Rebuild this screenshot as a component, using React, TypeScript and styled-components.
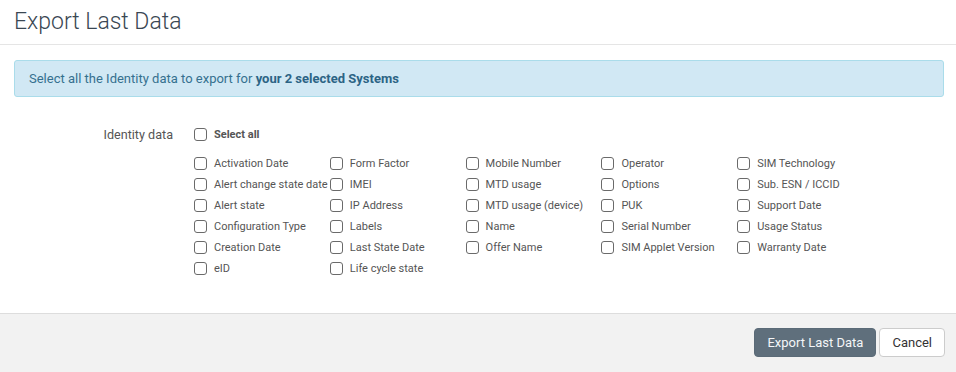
import React from "react";
import styled, { createGlobalStyle } from "styled-components";

const Global = createGlobalStyle`
  html, body { margin: 0; padding: 0; background: #fff; }
  body { font-family: Roboto, "Liberation Sans", Arial, sans-serif; }
  * { box-sizing: border-box; }
`;

const Modal = styled.div`
  width: 956px;
  height: 372px;
  display: flex;
  flex-direction: column;
  background: #fff;
`;

const Header = styled.div`
  height: 45px;
  border-bottom: 1px solid #e5e5e5;
  padding: 0 14px;
  display: flex;
  align-items: center;
`;

const Title = styled.h1`
  margin: 0;
  margin-top: -1px;
  font-size: 23px;
  font-weight: 300;
  color: #3a4753;
`;

const Body = styled.div`
  flex: 1;
  padding: 15px 12px 0 14px;
`;

const Alert = styled.div`
  height: 37px;
  background: #d1e8f4;
  border: 1px solid #aadcea;
  border-radius: 3px;
  padding: 0 14px;
  display: flex;
  align-items: center;
  font-size: 13px;
  color: #35708f;
  strong { font-weight: 700; color: #2c6485; }
`;

const FormRow = styled.div`
  display: flex;
  margin-top: 27px;
  margin-left: -14px;
`;

const FieldLabel = styled.div`
  width: 173px;
  text-align: right;
  font-size: 12.6px;
  color: #555;
  line-height: 21px;
  margin-right: 21px;
`;

const Options = styled.div`
  display: flex;
  flex-direction: column;
`;

const Grid = styled.div`
  display: grid;
  grid-template-columns: repeat(5, 135.8px);
  margin-top: 8px;
`;

const Column = styled.div`
  display: flex;
  flex-direction: column;
`;

const Item = styled.label<{ $bold?: boolean }>`
  height: 21px;
  display: flex;
  align-items: center;
  font-size: 11px;
  color: #555;
  font-weight: ${(p) => (p.$bold ? 700 : 400)};
  white-space: nowrap;
`;

const Box = styled.span`
  width: 13px;
  height: 13px;
  border: 1px solid #6a6a6a;
  border-radius: 3px;
  background: #fff;
  margin-right: 7px;
  flex: none;
`;

const Footer = styled.div`
  height: 59px;
  border-top: 1px solid #ddd;
  background: #f2f2f2;
  display: flex;
  justify-content: flex-end;
  align-items: flex-start;
  padding: 14px 11px 0 0;
  gap: 3px;
`;

const Button = styled.button<{ $primary?: boolean }>`
  height: 29px;
  padding: 0 12px;
  font-family: inherit;
  font-size: 13px;
  border-radius: 4px;
  border: 1px solid ${(p) => (p.$primary ? "#5b6b78" : "#ccc")};
  background: ${(p) => (p.$primary ? "#5f6f7c" : "#fff")};
  color: ${(p) => (p.$primary ? "#f4f6f8" : "#333")};
`;

const columns: string[][] = [
  ["Activation Date", "Alert change state date", "Alert state", "Configuration Type", "Creation Date", "eID"],
  ["Form Factor", "IMEI", "IP Address", "Labels", "Last State Date", "Life cycle state"],
  ["Mobile Number", "MTD usage", "MTD usage (device)", "Name", "Offer Name"],
  ["Operator", "Options", "PUK", "Serial Number", "SIM Applet Version"],
  ["SIM Technology", "Sub. ESN / ICCID", "Support Date", "Usage Status", "Warranty Date"],
];

export default function App() {
  return (
    <Modal>
      <Global />
      <Header>
        <Title>Export Last Data</Title>
      </Header>
      <Body>
        <Alert>
          <span>
            Select all the Identity data to export for <strong>your 2 selected Systems</strong>
          </span>
        </Alert>
        <FormRow>
          <FieldLabel>Identity data</FieldLabel>
          <Options>
            <Item $bold>
              <Box />
              Select all
            </Item>
            <Grid>
              {columns.map((col, i) => (
                <Column key={i}>
                  {col.map((name) => (
                    <Item key={name}>
                      <Box />
                      {name}
                    </Item>
                  ))}
                </Column>
              ))}
            </Grid>
          </Options>
        </FormRow>
      </Body>
      <Footer>
        <Button $primary>Export Last Data</Button>
        <Button>Cancel</Button>
      </Footer>
    </Modal>
  );
}
